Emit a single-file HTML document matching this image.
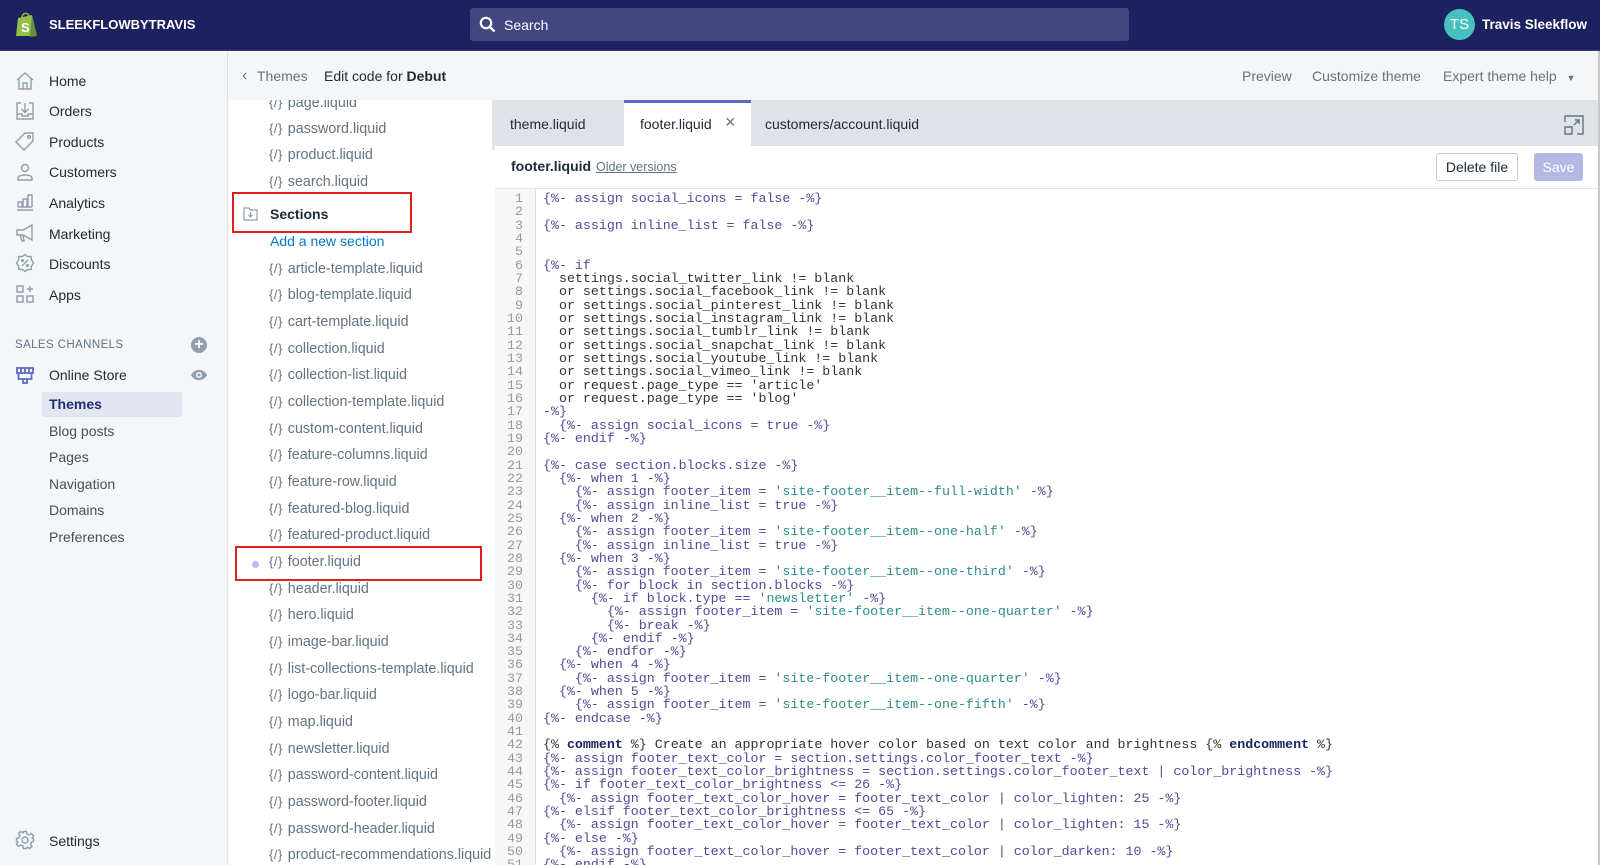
<!DOCTYPE html>
<html><head><meta charset="utf-8"><style>
*{margin:0;padding:0;box-sizing:border-box}
body{width:1600px;height:865px;overflow:hidden;font-family:"Liberation Sans",sans-serif;background:#f4f6f8;position:relative;color:#212b36}
.abs{position:absolute}
.top{left:0;top:0;width:1600px;height:51px;background:#1c2260;border-bottom:1px solid #3a3f7a}
.nav{left:0;top:51px;width:228px;height:814px;background:#f4f6f8;border-right:1px solid #dfe3e8}
.ni{position:absolute;left:49px;font-size:14px;color:#212b36;line-height:18px}
.ic{position:absolute;left:15px;width:20px;height:20px}
.sub{position:absolute;left:49px;font-size:14px;color:#454f5b;line-height:18px}
.hdr{left:229px;top:51px;width:1371px;height:49px;background:#f4f6f8}
.files{left:229px;top:100px;width:266px;height:765px;background:#fff;overflow:hidden}
.f{position:absolute;left:40px;font-size:14.3px;color:#637381;line-height:18px;white-space:nowrap}
.f b{font-weight:normal;font-size:13px;margin-right:5px;letter-spacing:0.5px}
.tabs{left:495px;top:100px;width:1105px;height:46px;background:#dfe3e8}
.code{left:495px;top:188px;width:1105px;height:677px;background:#fff;overflow:hidden;border-top:1px solid #e6e6e6}
.gut{position:absolute;left:0;top:0;width:41px;height:100%;background:#f7f7f7;border-right:1px solid #ddd}
pre{font-family:"Liberation Mono",monospace;font-size:13.3px;line-height:13.33px;position:absolute;top:3px;color:#333}
.ln{left:0;width:28px;text-align:right;color:#999}
.src{left:48px}
.k{color:#4f4b97}.s{color:#2f8b8b}.c{color:#1c2260;font-weight:bold}
</style></head><body>
<div class="abs top">
 <svg class="abs" style="left:15px;top:11px" width="24" height="27" viewBox="0 0 24 27"><path d="M3 7 L17 4 L22 25 L1 25 Z" fill="#95bf47"/><path d="M17 4 L22 25 L15 26 Z" fill="#5e8e3e"/><path d="M7 7 C7 1 14 1 14 6" stroke="#95bf47" stroke-width="1.6" fill="none"/><text x="6" y="21" font-size="13" font-weight="bold" fill="#fff" font-family="Liberation Sans">S</text></svg>
 <div class="abs" style="left:49px;top:17px;color:#fff;font-weight:bold;font-size:13px">SLEEKFLOWBYTRAVIS</div>
 <div class="abs" style="left:470px;top:8px;width:659px;height:33px;background:#43467f;border-radius:3px"></div>
 <svg class="abs" style="left:479px;top:16px" width="17" height="17" viewBox="0 0 17 17"><circle cx="7" cy="7" r="5.2" stroke="#fff" stroke-width="2.2" fill="none"/><path d="M11 11 L15.5 15.5" stroke="#fff" stroke-width="2.4"/></svg>
 <div class="abs" style="left:504px;top:17px;color:#fff;font-size:14px">Search</div>
 <div class="abs" style="left:1444px;top:9px;width:31px;height:31px;border-radius:50%;background:#47c1bf;color:#fff;font-size:15px;text-align:center;line-height:31px">TS</div>
 <div class="abs" style="left:1482px;top:17px;color:#fff;font-weight:bold;font-size:13.5px">Travis Sleekflow</div>
</div>
<div class="abs nav">
 <svg class="ic" style="top:20px" viewBox="0 0 20 20" fill="none" stroke="#919eab" stroke-width="1.4"><path d="M2 9 L10 2 L18 9 M4 7.5 V18 H16 V7.5 M8 18 V12 H12 V18"/></svg>
 <svg class="ic" style="top:50px" viewBox="0 0 20 20" fill="none" stroke="#919eab" stroke-width="1.4"><path d="M6 2 H2 V18 H18 V2 H14 M10 2 V11 M6.5 8 L10 11.5 L13.5 8 M2 13 H7 V15 H13 V13 H18"/></svg>
 <svg class="ic" style="top:80px" viewBox="0 0 20 20" fill="none" stroke="#919eab" stroke-width="1.4"><path d="M10 2 H18 V10 L9 19 L1 11 Z"/><circle cx="14" cy="6" r="1.3"/></svg>
 <svg class="ic" style="top:111px" viewBox="0 0 20 20" fill="none" stroke="#919eab" stroke-width="1.4"><circle cx="10" cy="6" r="3.5"/><path d="M3 18 V16 C3 12 17 12 17 16 V18 Z"/></svg>
 <svg class="ic" style="top:141px" viewBox="0 0 20 20" fill="none" stroke="#919eab" stroke-width="1.4"><path d="M2 18 H18 M3 15 V10 H7 V15 M8 15 V7 H12 V15 M13 15 V3 H17 V15 M3 15 H17"/></svg>
 <svg class="ic" style="top:172px" viewBox="0 0 20 20" fill="none" stroke="#919eab" stroke-width="1.4"><path d="M2 7 H8 L17 2 V17 L8 12 H2 Z M5 12 L7 18 H9 L8 12"/></svg>
 <svg class="ic" style="top:202px" viewBox="0 0 20 20" fill="none" stroke="#919eab" stroke-width="1.4"><path d="M10 1.5 L12.5 3.5 L16 3.5 L16.5 7 L18.5 10 L16.5 13 L16 16.5 L12.5 16.5 L10 18.5 L7.5 16.5 L4 16.5 L3.5 13 L1.5 10 L3.5 7 L4 3.5 L7.5 3.5 Z M7 13 L13 7"/><circle cx="7.5" cy="7.5" r="0.8"/><circle cx="12.5" cy="12.5" r="0.8"/></svg>
 <svg class="ic" style="top:233px" viewBox="0 0 20 20" fill="none" stroke="#919eab" stroke-width="1.4"><path d="M2 2 H8 V8 H2 Z M2 12 H8 V18 H2 Z M12 12 H18 V18 H12 Z M15 2 V8 M12 5 H18"/></svg>
 <div class="ni" style="top:21px">Home</div>
 <div class="ni" style="top:51px">Orders</div>
 <div class="ni" style="top:82px">Products</div>
 <div class="ni" style="top:112px">Customers</div>
 <div class="ni" style="top:143px">Analytics</div>
 <div class="ni" style="top:174px">Marketing</div>
 <div class="ni" style="top:204px">Discounts</div>
 <div class="ni" style="top:235px">Apps</div>
 <div class="abs" style="left:15px;top:288px;font-size:11.5px;color:#637381;letter-spacing:0.4px">SALES CHANNELS</div>
 <div class="abs" style="left:191px;top:286px;width:16px;height:16px;border-radius:50%;background:#919eab;color:#fff;font-size:16px;line-height:16px;text-align:center;font-weight:bold">+</div>
 <svg class="ic" style="top:314px" viewBox="0 0 20 20" fill="none" stroke="#5c6ac4" stroke-width="1.8"><path d="M2 3 H18 V8 H2 Z M6 3 V8 M10 3 V8 M14 3 V8 M3.5 8 V14 H16.5 V8 M8 14 V18 H12 V14"/></svg>
 <div class="ni" style="top:315px">Online Store</div>
 <svg class="abs" style="left:190px;top:317px" width="18" height="14" viewBox="0 0 18 14"><path d="M1 7 C5 0 13 0 17 7 C13 14 5 14 1 7 Z" fill="#919eab"/><circle cx="9" cy="7" r="3" fill="#f4f6f8"/><circle cx="9" cy="7" r="1.5" fill="#919eab"/></svg>
 <div class="abs" style="left:42px;top:341px;width:140px;height:25px;background:#e3e5f1;border-radius:3px"></div>
 <div class="sub" style="top:344px;color:#202e78;font-weight:bold">Themes</div>
 <div class="sub" style="top:371px">Blog posts</div>
 <div class="sub" style="top:397px">Pages</div>
 <div class="sub" style="top:424px">Navigation</div>
 <div class="sub" style="top:450px">Domains</div>
 <div class="sub" style="top:477px">Preferences</div>
 <svg class="ic" style="top:779px" viewBox="0 0 20 20" fill="none" stroke="#919eab" stroke-width="1.4"><circle cx="10" cy="10" r="3"/><path d="M8.5 1.5 H11.5 L12 4 L14.3 5 L16.5 3.5 L18.5 5.8 L17 8 L18.5 8.5 V11.5 L16.5 12 L15.5 14.3 L17 16.5 L14.5 18.5 L12.3 17 L11.5 18.5 H8.5 L8 16 L5.7 15 L3.5 16.5 L1.5 14.2 L3 12 L1.5 11.5 V8.5 L4 8 L5 5.7 L3.5 3.5 L5.8 1.5 L8 3 Z"/></svg>
 <div class="ni" style="top:781px">Settings</div>
</div>
<div class="abs hdr">
 <div class="abs" style="left:13px;top:16px;font-size:16px;color:#637381">‹</div>
 <div class="abs" style="left:28px;top:17px;font-size:14px;color:#637381">Themes</div>
 <div class="abs" style="left:95px;top:17px;font-size:14px;color:#212b36">Edit code for <b>Debut</b></div>
 <div class="abs" style="left:1013px;top:17px;font-size:14px;color:#637381">Preview</div>
 <div class="abs" style="left:1083px;top:17px;font-size:14px;color:#637381">Customize theme</div>
 <div class="abs" style="left:1214px;top:17px;font-size:14px;color:#637381">Expert theme help <span style="font-size:9px;margin-left:6px">▼</span></div>
</div>
<div class="abs files">
 <div class="f" style="top:-6px"><b>{/}</b>page.liquid</div>
 <div class="f" style="top:20px"><b>{/}</b>password.liquid</div>
 <div class="f" style="top:46px"><b>{/}</b>product.liquid</div>
 <div class="f" style="top:73px"><b>{/}</b>search.liquid</div>
 <div class="abs" style="left:3px;top:92px;width:180px;height:41px;border:2px solid #e0201c"></div>
 <svg class="abs" style="left:14px;top:107px" width="15" height="14" viewBox="0 0 15 14" fill="none" stroke="#919eab" stroke-width="1.2"><path d="M1 1 H6 L7 3 H14 V13 H1 Z M7.5 5 V10 M5.5 8 L7.5 10 L9.5 8"/></svg>
 <div class="abs" style="left:41px;top:106px;font-size:14px;font-weight:bold;color:#212b36">Sections</div>
 <div class="abs" style="left:41px;top:133px;font-size:14px;color:#007ace">Add a new section</div>
 <div class="f" style="top:160px"><b>{/}</b>article-template.liquid</div>
 <div class="f" style="top:186px"><b>{/}</b>blog-template.liquid</div>
 <div class="f" style="top:213px"><b>{/}</b>cart-template.liquid</div>
 <div class="f" style="top:240px"><b>{/}</b>collection.liquid</div>
 <div class="f" style="top:266px"><b>{/}</b>collection-list.liquid</div>
 <div class="f" style="top:293px"><b>{/}</b>collection-template.liquid</div>
 <div class="f" style="top:320px"><b>{/}</b>custom-content.liquid</div>
 <div class="f" style="top:346px"><b>{/}</b>feature-columns.liquid</div>
 <div class="f" style="top:373px"><b>{/}</b>feature-row.liquid</div>
 <div class="f" style="top:400px"><b>{/}</b>featured-blog.liquid</div>
 <div class="f" style="top:426px"><b>{/}</b>featured-product.liquid</div>
 <div class="abs" style="left:6px;top:446px;width:247px;height:35px;border:2px solid #e0201c"></div>
 <div class="abs" style="left:23px;top:461px;width:7px;height:7px;border-radius:50%;background:#b3bcf5"></div>
 <div class="f" style="top:453px"><b>{/}</b>footer.liquid</div>
 <div class="f" style="top:480px"><b>{/}</b>header.liquid</div>
 <div class="f" style="top:506px"><b>{/}</b>hero.liquid</div>
 <div class="f" style="top:533px"><b>{/}</b>image-bar.liquid</div>
 <div class="f" style="top:560px"><b>{/}</b>list-collections-template.liquid</div>
 <div class="f" style="top:586px"><b>{/}</b>logo-bar.liquid</div>
 <div class="f" style="top:613px"><b>{/}</b>map.liquid</div>
 <div class="f" style="top:640px"><b>{/}</b>newsletter.liquid</div>
 <div class="f" style="top:666px"><b>{/}</b>password-content.liquid</div>
 <div class="f" style="top:693px"><b>{/}</b>password-footer.liquid</div>
 <div class="f" style="top:720px"><b>{/}</b>password-header.liquid</div>
 <div class="f" style="top:746px"><b>{/}</b>product-recommendations.liquid</div>
 <div class="abs" style="left:263px;top:0;width:3px;height:50px;background:#e5e5e5"></div>
</div>
<div class="abs tabs">
 <div class="abs" style="left:15px;top:16px;font-size:14px;color:#212b36">theme.liquid</div>
 <div class="abs" style="left:129px;top:0;width:127px;height:46px;background:#fff;border-top:3px solid #5c6ac4"></div>
 <div class="abs" style="left:145px;top:16px;font-size:14px;color:#212b36">footer.liquid</div>
 <div class="abs" style="left:230px;top:12px;font-size:18px;color:#637381">×</div>
 <div class="abs" style="left:270px;top:16px;font-size:14px;color:#212b36">customers/account.liquid</div>
 <svg class="abs" style="left:1069px;top:15px" width="20" height="20" viewBox="0 0 20 20" fill="none" stroke="#637381" stroke-width="1.4"><path d="M1 7 V1 H19 V19 H13 M1 12 H8 V19 H1 Z M10 10 L15 5 M11 5 H15 V9"/></svg>
</div>
<div class="abs" style="left:495px;top:146px;width:1105px;height:42px;background:#fff">
 <div class="abs" style="left:16px;top:12px;font-size:14px;font-weight:bold;color:#212b36">footer.liquid</div>
 <div class="abs" style="left:101px;top:14px;font-size:12.5px;color:#637381;text-decoration:underline">Older versions</div>
 <div class="abs" style="left:941px;top:7px;width:82px;height:28px;border:1px solid #c4cdd5;border-radius:3px;font-size:14px;text-align:center;line-height:26px;background:#fff">Delete file</div>
 <div class="abs" style="left:1039px;top:7px;width:49px;height:28px;border-radius:3px;background:#b3b9e4;color:#fff;font-size:14px;text-align:center;line-height:28px">Save</div>
</div>
<div class="abs code">
 <div class="gut"></div>
<pre class="ln">1
2
3
4
5
6
7
8
9
10
11
12
13
14
15
16
17
18
19
20
21
22
23
24
25
26
27
28
29
30
31
32
33
34
35
36
37
38
39
40
41
42
43
44
45
46
47
48
49
50
51</pre>
<pre class="src"><span class="k">{%- assign social_icons = false -%}</span>

<span class="k">{%- assign inline_list = false -%}</span>


<span class="k">{%- if</span>
  settings.social_twitter_link != blank
  or settings.social_facebook_link != blank
  or settings.social_pinterest_link != blank
  or settings.social_instagram_link != blank
  or settings.social_tumblr_link != blank
  or settings.social_snapchat_link != blank
  or settings.social_youtube_link != blank
  or settings.social_vimeo_link != blank
  or request.page_type == 'article'
  or request.page_type == 'blog'
<span class="k">-%}</span>
  <span class="k">{%- assign social_icons = true -%}</span>
<span class="k">{%- endif -%}</span>

<span class="k">{%- case section.blocks.size -%}</span>
  <span class="k">{%- when 1 -%}</span>
    <span class="k">{%- assign footer_item = </span><span class="s">'site-footer__item--full-width'</span><span class="k"> -%}</span>
    <span class="k">{%- assign inline_list = true -%}</span>
  <span class="k">{%- when 2 -%}</span>
    <span class="k">{%- assign footer_item = </span><span class="s">'site-footer__item--one-half'</span><span class="k"> -%}</span>
    <span class="k">{%- assign inline_list = true -%}</span>
  <span class="k">{%- when 3 -%}</span>
    <span class="k">{%- assign footer_item = </span><span class="s">'site-footer__item--one-third'</span><span class="k"> -%}</span>
    <span class="k">{%- for block in section.blocks -%}</span>
      <span class="k">{%- if block.type == </span><span class="s">'newsletter'</span><span class="k"> -%}</span>
        <span class="k">{%- assign footer_item = </span><span class="s">'site-footer__item--one-quarter'</span><span class="k"> -%}</span>
        <span class="k">{%- break -%}</span>
      <span class="k">{%- endif -%}</span>
    <span class="k">{%- endfor -%}</span>
  <span class="k">{%- when 4 -%}</span>
    <span class="k">{%- assign footer_item = </span><span class="s">'site-footer__item--one-quarter'</span><span class="k"> -%}</span>
  <span class="k">{%- when 5 -%}</span>
    <span class="k">{%- assign footer_item = </span><span class="s">'site-footer__item--one-fifth'</span><span class="k"> -%}</span>
<span class="k">{%- endcase -%}</span>

{% <span class="c">comment</span> %} Create an appropriate hover color based on text color and brightness {% <span class="c">endcomment</span> %}
<span class="k">{%- assign footer_text_color = section.settings.color_footer_text -%}</span>
<span class="k">{%- assign footer_text_color_brightness = section.settings.color_footer_text | color_brightness -%}</span>
<span class="k">{%- if footer_text_color_brightness &lt;= 26 -%}</span>
  <span class="k">{%- assign footer_text_color_hover = footer_text_color | color_lighten: 25 -%}</span>
<span class="k">{%- elsif footer_text_color_brightness &lt;= 65 -%}</span>
  <span class="k">{%- assign footer_text_color_hover = footer_text_color | color_lighten: 15 -%}</span>
<span class="k">{%- else -%}</span>
  <span class="k">{%- assign footer_text_color_hover = footer_text_color | color_darken: 10 -%}</span>
<span class="k">{%- endif -%}</span></pre>
</div>
<div class="abs" style="left:1598px;top:51px;width:2px;height:814px;background:#c8c8c8"></div>
</body></html>
